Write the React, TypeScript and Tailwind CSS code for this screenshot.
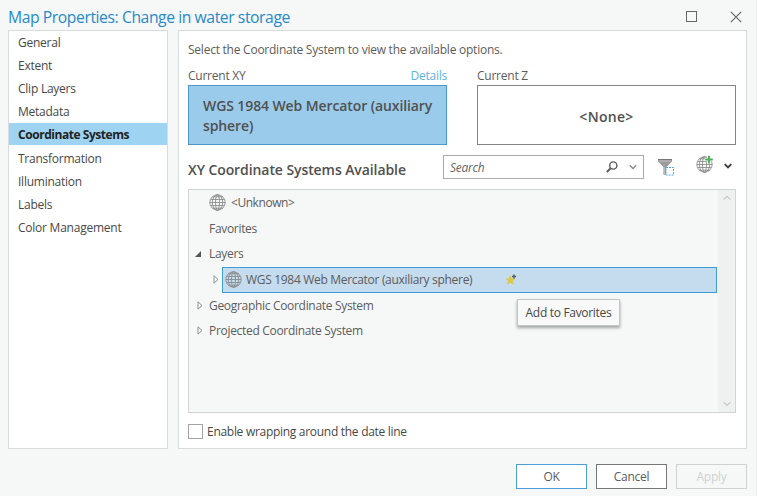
import React from "react";

const Globe = ({ className = "" }: { className?: string }) => (
  <svg className={className} width="17" height="17" viewBox="0 0 17 17" fill="none" stroke="#878888" strokeWidth="0.85">
    <circle cx="8.5" cy="8.5" r="7.7" />
    <ellipse cx="8.5" cy="8.5" rx="5.2" ry="7.7" />
    <ellipse cx="8.5" cy="8.5" rx="2" ry="7.7" />
    <path d="M0.8 8.5h15.4M1.6 5.5h13.8M1.6 11.5h13.8M3.5 2.8h10M3.5 14.2h10" />
  </svg>
);

const Chevron = ({ color, up, width = 1.2 }: { color: string; up?: boolean; width?: number }) => (
  <svg width="8" height="6" viewBox="0 0 8 6" fill="none" stroke={color} strokeWidth={width}>
    <path d={up ? "M0.7 4.7L4 1.4L7.3 4.7" : "M0.7 1.2L4 4.5L7.3 1.2"} />
  </svg>
);

const Collapsed = () => (
  <svg width="6" height="9" viewBox="0 0 6 9" fill="#fbfcfc" stroke="#8e8f8f" strokeWidth="1">
    <path d="M1 0.8v7.4L5 4.5Z" />
  </svg>
);

const navItems = [
  "General",
  "Extent",
  "Clip Layers",
  "Metadata",
  "Coordinate Systems",
  "Transformation",
  "Illumination",
  "Labels",
  "Color Management",
];

export default function App() {
  return (
    <div className="flex h-[496px] w-[757px] flex-col overflow-hidden border-r border-[#eceeee] bg-[#f6f8f8] font-['Open_Sans','Noto_Sans',sans-serif] text-[12px] tracking-[-0.24px] text-[#5c5c5c]">
      <header className="flex h-[30px] shrink-0 items-center pl-[8px] pt-[3px]">
        <h1 className="whitespace-nowrap text-[15.7px] leading-[24px] tracking-[-0.42px] text-[#2689c9]">
          Map Properties: Change in water storage
        </h1>
        <div className="ml-auto flex items-center gap-[33px] pr-[14px]">
          <div className="h-[11px] w-[11px] border border-[#666]" />
          <svg width="12" height="12" viewBox="0 0 12 12" stroke="#666" strokeWidth="1.2">
            <path d="M0.8 0.8L11.2 11.2M11.2 0.8L0.8 11.2" />
          </svg>
        </div>
      </header>

      <main className="flex h-[419px] shrink-0 gap-[10px] pl-[8px]">
        <nav className="w-[160px] border border-[#d9dcdc] bg-white text-[#484848]">
          <ul>
            {navItems.map((item) => (
              <li key={item} className="flex h-[23.15px] items-start">
                <div
                  className={
                    item === "Coordinate Systems"
                      ? "-mt-[0.4px] h-[22.15px] w-full bg-[#9ed3f2] pl-[9px] font-bold leading-[24px] tracking-[-0.45px] text-[#222]"
                      : "h-[22.15px] w-full pl-[9px] leading-[23.6px]"
                  }
                >
                  {item}
                </div>
              </li>
            ))}
          </ul>
        </nav>

        <section className="flex w-[569px] flex-col border border-[#d9dcdc] bg-white pl-[9px] pr-[10px]">
          <p className="mt-[10px] h-[16px] whitespace-nowrap leading-[17px]">
            Select the Coordinate System to view the available options.
          </p>
          <div className="mt-[10px] flex justify-between">
            <div className="w-[259px]">
              <div className="flex h-[18px] justify-between leading-[17px]">
                <span>Current XY</span>
                <span className="text-[#5eb2e0]">Details</span>
              </div>
              <div className="flex h-[60px] items-center border border-[#4c98c8] bg-[#9bcbeb] pl-[14px] pt-[2px] text-[14px] font-semibold leading-[20px] tracking-[-0.1px] text-[#505050]">
                <span className="whitespace-nowrap">
                  WGS 1984 Web Mercator (auxiliary
                  <br />
                  sphere)
                </span>
              </div>
            </div>
            <div className="w-[259px]">
              <div className="h-[18px] leading-[17px]">Current Z</div>
              <div className="flex h-[60px] items-center justify-center border border-[#858585] pt-[2px] text-[14px] font-semibold tracking-[0.3px] text-[#505050]">
                &lt;None&gt;
              </div>
            </div>
          </div>

          <div className="flex h-[44px] items-start pt-[10px]">
            <h2 className="mt-[5px] w-[255px] whitespace-nowrap text-[14px] font-semibold leading-[20px] tracking-[-0.08px] text-[#505050]">
              XY Coordinate Systems Available
            </h2>
            <div className="flex h-[24px] w-[201px] items-center border border-[#ababab] pl-[6px] pr-[6px]">
              <span className="pt-[1px] italic text-[#666]">Search</span>
              <svg className="ml-auto mr-[11px]" width="12" height="12" viewBox="0 0 12 12" fill="none" stroke="#5a5a5a">
                <circle cx="7.3" cy="4.5" r="3.6" strokeWidth="1.4" />
                <path d="M4.7 7.2L0.8 11" strokeWidth="1.9" />
              </svg>
              <Chevron color="#8a8a8a" width={1.4} />
            </div>
            <svg className="ml-[13px] mt-[3px]" width="18" height="18" viewBox="0 0 18 18">
              <path d="M1 1h14v2.5L9.6 9v7.8H6.4V9L1 3.5Z" fill="#9b9c9c" />
              <path d="M1 1.5h14" stroke="#757676" />
              <path d="M2.5 3h11M7.4 9v7" stroke="#c2c3c3" />
              <rect x="9" y="9.5" width="7.5" height="7.5" fill="#fff" stroke="#4da6df" strokeDasharray="2 1" />
            </svg>
            <div className="relative ml-[21px] mt-[1px]">
              <Globe />
              <svg className="absolute left-[8px] top-[-1px]" width="10" height="10" viewBox="0 0 10 10">
                <path d="M5 0.5v8.5M1 4.5h8.5" stroke="#fff" strokeWidth="3.6" />
                <path d="M5 0.8v7.6M1.2 4.5h7.6" stroke="#4eab58" strokeWidth="1.9" />
              </svg>
            </div>
            <div className="ml-[11px] flex h-[22px] items-center">
              <Chevron color="#3c3c3c" width={1.9} />
            </div>
          </div>

          <div className="relative flex h-[224px] w-[548px] border border-[#d2d4d4] bg-[#f6f8f8] tracking-[-0.31px]">
            <div className="w-[529px]">
              <div className="flex h-[25.6px] items-center pl-[20px]">
                <Globe />
                <span className="ml-[5px] pt-[1px] tracking-[-0.45px]">&lt;Unknown&gt;</span>
              </div>
              <div className="flex h-[25.6px] items-center pl-[20px] pt-[1px]">Favorites</div>
              <div className="flex h-[25.6px] items-center pl-[5px]">
                <svg width="8" height="8" viewBox="0 0 8 8">
                  <path d="M7 1v6H1Z" fill="#555" />
                </svg>
                <span className="ml-[7px] pt-[1px]">Layers</span>
              </div>
              <div className="flex h-[25.6px] items-center pl-[24px]">
                <Collapsed />
                <div className="ml-[3px] flex h-[26px] w-[495px] shrink-0 items-center border border-[#3e9cd6] bg-[#c5dbee] pl-[2px]">
                  <Globe />
                  <span className="ml-[4px] w-[259px] whitespace-nowrap">WGS 1984 Web Mercator (auxiliary sphere)</span>
                  <svg width="12" height="12" viewBox="0 0 12 12">
                    <path d="M5.4 1.2L6.8 4.6L10.4 4.8L7.6 7.1L8.7 10.8L5.4 8.8L2.1 10.8L3.2 7.1L0.4 4.8L4 4.6Z" fill="#dfc644" />
                    <path d="M9 0.4v4M7 2.4h4" stroke="#56615f" strokeWidth="1.5" />
                  </svg>
                </div>
              </div>
              <div className="flex h-[25.6px] items-center pl-[8px]">
                <Collapsed />
                <span className="ml-[6px] pt-[1px]">Geographic Coordinate System</span>
              </div>
              <div className="flex h-[25.6px] items-center pl-[8px]">
                <Collapsed />
                <span className="ml-[6px] pt-[1px]">Projected Coordinate System</span>
              </div>
            </div>
            <div className="flex flex-1 flex-col items-center justify-between bg-[#eff1f1] py-[5px]">
              <Chevron color="#c6c8c8" up />
              <Chevron color="#c6c8c8" />
            </div>
            <div className="absolute left-[328px] top-[109px] flex h-[27px] w-[103px] items-center justify-center whitespace-nowrap border border-[#c4c6c6] bg-[#f9f9f9] text-[#484848] shadow-[0px_2px_3px_rgba(0,0,0,0.35)]">
              Add to Favorites
            </div>
          </div>

          <label className="mt-[11px] flex h-[15px] items-center">
            <span className="h-[15px] w-[15px] border border-[#a3a3a3] bg-white" />
            <span className="ml-[4px] whitespace-nowrap tracking-[-0.29px] text-[#484848]">
              Enable wrapping around the date line
            </span>
          </label>
        </section>
      </main>

      <footer className="mt-[15px] flex h-[25px] justify-end gap-[9px] pr-[9px]">
        <button className="w-[71px] border border-[#4c9fdc] bg-white pt-[1px]">OK</button>
        <button className="w-[71px] border border-[#777] bg-white pt-[1px]">Cancel</button>
        <button className="w-[71px] border border-[#d0d2d2] pt-[1px] text-[#cfd1d1]">Apply</button>
      </footer>
    </div>
  );
}
